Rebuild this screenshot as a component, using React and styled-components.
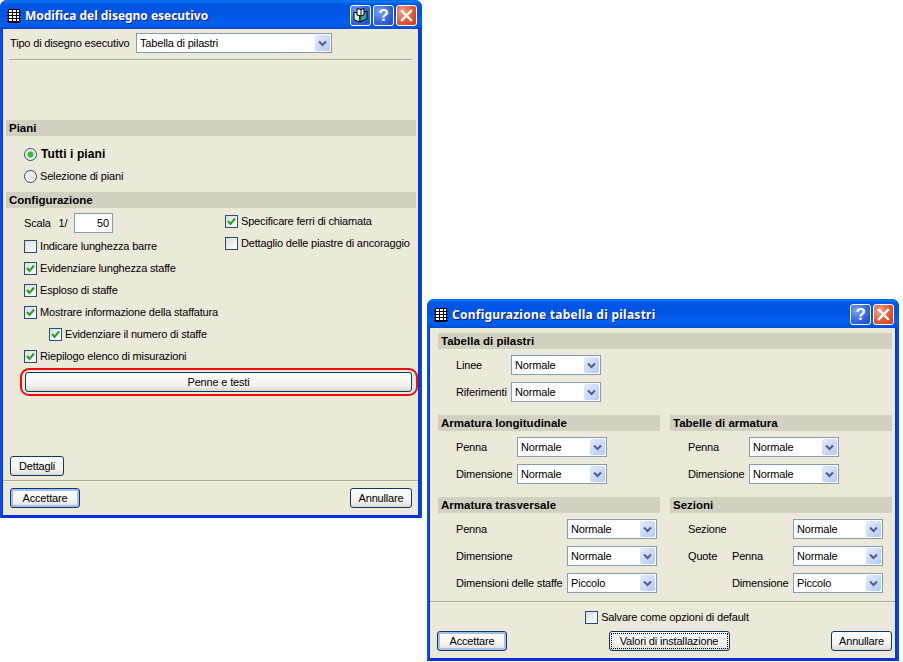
import React from 'react';
import styled, { createGlobalStyle } from 'styled-components';

const GlobalStyle = createGlobalStyle`
  html, body {
    margin: 0;
    padding: 0;
    background: #ffffff;
  }
  body {
    font-family: "Liberation Sans", Arial, sans-serif;
    font-size: 11px;
    letter-spacing: -0.17px;
    color: #000000;
  }
`;

const Desktop = styled.div`
  position: relative;
  width: 903px;
  height: 662px;
  overflow: hidden;
`;

const Win = styled.div`
  position: absolute;
  left: ${(p) => p.$left}px;
  top: ${(p) => p.$top}px;
  width: ${(p) => p.$width}px;
  height: ${(p) => p.$height}px;
  display: flex;
  flex-direction: column;
  box-sizing: border-box;
  padding: 0 4px 3px 3px;
  background: linear-gradient(to right, #0a5be8 0, #0831d9 3px, #0831d9 calc(100% - 4px), #0a4fd8 100%);
  border-radius: 7px 7px 0 0;
`;

const TitleBar = styled.div`
  height: 29px;
  box-sizing: border-box;
  margin: 0 -4px 0 -3px;
  padding: 2px 5px 0 7px;
  flex: none;
  display: flex;
  align-items: center;
  gap: 4px;
  border-radius: 7px 7px 0 0;
  background: linear-gradient(to bottom, #0a5ad8 0, #0a7bf2 1px, #0458e6 4px, #0054e3 9px, #0055e5 15px, #0360f0 22px, #0059e8 26px, #0048cf 29px);
`;

const Title = styled.span`
  flex: 1;
  font-family: "Noto Sans", sans-serif;
  font-weight: 700;
  font-size: 12px;
  letter-spacing: ${(p) => p.$spacing}px;
  color: #ffffff;
  text-shadow: 1px 1px 0 #0f1f8f;
  white-space: nowrap;
`;

const CaptionButton = styled.div`
  width: 21px;
  height: 21px;
  margin-left: -2px;
  box-sizing: border-box;
  flex: none;
  display: flex;
  align-items: center;
  justify-content: center;
  border: 1px solid #ffffff;
  border-radius: 3px;
  background: ${(p) =>
    p.$close
      ? 'radial-gradient(circle at 30% 30%, #f0a58c, #e0532f 60%, #c63a14)'
      : 'radial-gradient(circle at 30% 30%, #7da4f5, #2f62dc 60%, #1f48c4)'};
`;

const HelpMark = styled.span`
  font-family: "Liberation Sans", sans-serif;
  font-weight: 700;
  font-size: 17px;
  line-height: 19px;
  color: #ffffff;
`;

const Client = styled.div`
  flex: 1;
  background: #ece9d8;
  display: flex;
  flex-direction: column;
  min-height: 0;
`;

const Band = styled.div`
  height: 16px;
  line-height: 16px;
  padding-left: 3px;
  background: #d4d0c0;
  font-weight: 700;
  font-size: 11.5px;
  letter-spacing: 0;
  white-space: nowrap;
`;

const Line = styled.div`
  height: 2px;
  flex: none;
  background: #aca899;
  border-bottom: 1px solid #f4f2e8;
  box-sizing: border-box;
  margin: ${(p) => p.$margin};
`;

const TypeRow = styled.div`
  display: flex;
  align-items: center;
  height: 20px;
  margin: 4px 0 0 7px;
`;

const TypeLabel = styled.span`
  width: 126px;
  white-space: nowrap;
`;

const ComboBox = styled.div`
  width: ${(p) => p.$width || 90}px;
  height: 20px;
  box-sizing: border-box;
  flex: none;
  display: flex;
  align-items: center;
  border: 1px solid #7f9db9;
  background: #ffffff;
  padding: 1px;
`;

const ComboText = styled.span`
  flex: 1;
  padding-left: 2px;
  white-space: nowrap;
`;

const ComboArrow = styled.span`
  width: 15px;
  height: 16px;
  display: flex;
  align-items: center;
  justify-content: center;
  border-radius: 2px;
  background: linear-gradient(135deg, #e4ecfd, #b4caf6);
`;

const BandWrap = styled.div`
  margin: ${(p) => p.$margin};
`;

const RadioRow = styled.label`
  display: flex;
  align-items: center;
  gap: ${(p) => (p.$bold ? 4 : 3)}px;
  height: 22px;
  padding-left: 21px;
  font-weight: ${(p) => (p.$bold ? 700 : 400)};
  font-size: ${(p) => (p.$bold ? '12px' : '11px')};
  letter-spacing: ${(p) => (p.$bold ? '0.1px' : '-0.17px')};
  white-space: nowrap;
`;

const RadioDot = styled.span`
  width: 13px;
  height: 13px;
  box-sizing: border-box;
  flex: none;
  border-radius: 50%;
  border: 1px solid #1c5180;
  background: radial-gradient(circle, ${(p) => (p.$on ? '#2fbf3a 0, #2fbf3a 2.5px, #e6e4da 3.5px' : '#e6e4da 0')}, #ffffff 100%);
`;

const ConfigGrid = styled.div`
  display: grid;
  grid-template-columns: 201px 1fr;
  padding: 2px 0 0 18px;
`;

const Column = styled.div`
  padding-top: ${(p) => p.$top || 0}px;
`;

const CheckRow = styled.label`
  display: flex;
  align-items: center;
  gap: 3px;
  height: 22px;
  padding-left: ${(p) => p.$indent || 0}px;
  white-space: nowrap;
`;

const CheckBox = styled.span`
  width: 13px;
  height: 13px;
  box-sizing: border-box;
  flex: none;
  display: flex;
  align-items: center;
  justify-content: center;
  border: 1px solid #1c5180;
  background: linear-gradient(135deg, #dcdcd7, #ffffff);
`;

const ScaleRow = styled.div`
  display: flex;
  align-items: flex-start;
  height: 22px;
`;

const ScaleLabel = styled.span`
  width: 50px;
  line-height: 20px;
  word-spacing: 1px;
  white-space: nowrap;
`;

const ScaleInput = styled.div`
  width: 39px;
  height: 20px;
  box-sizing: border-box;
  border: 1px solid #7f9db9;
  background: #ffffff;
  text-align: right;
  padding-right: 3px;
  line-height: 18px;
`;

const RedRing = styled.div`
  margin: 1px -2px 0 14px;
  height: 28px;
  box-sizing: border-box;
  border: 2px solid #ee0c0c;
  border-radius: 9px;
  padding: 2px 4px 2px 3px;
`;

const Button = styled.div`
  width: ${(p) => (p.$width ? `${p.$width}px` : 'auto')};
  height: 20px;
  box-sizing: border-box;
  display: flex;
  align-items: center;
  justify-content: center;
  border: 1px solid #003c74;
  border-radius: 3px;
  background: linear-gradient(to bottom, #ffffff, #f3f2ec 70%, #dcd8cc);
  box-shadow: ${(p) => (p.$default ? 'inset 0 0 0 2px #a5bfe8' : 'none')};
  white-space: nowrap;
  position: relative;
`;

const FocusDots = styled.span`
  position: absolute;
  inset: 1px;
  border: 1px dotted #000000;
`;

const DetailWrap = styled.div`
  margin: 60px 0 0 7px;
`;

const Footer = styled.div`
  display: flex;
  justify-content: space-between;
  align-items: flex-start;
  padding: ${(p) => p.$padding};
`;

const BandGrid = styled.div`
  display: grid;
  grid-template-columns: ${(p) => p.$cols || '222px 222px'};
  column-gap: 10px;
  margin: ${(p) => p.$margin};
`;

const Fields = styled.div`
  display: flex;
  flex-direction: column;
  gap: 7px;
  margin-top: 6px;
  padding-left: 18px;
`;

const Field = styled.div`
  display: flex;
  align-items: center;
  height: 20px;
`;

const FieldLabel = styled.span`
  width: ${(p) => p.$width}px;
  flex: none;
  white-space: nowrap;
`;

const QuoteWord = styled.span`
  display: inline-block;
  width: ${(p) => p.$width}px;
`;

const SaveRow = styled.div`
  display: flex;
  justify-content: center;
  margin: 3px 0 0 9px;
`;

const TableIcon = () => (
  <svg width="14" height="14" viewBox="0 0 14 14">
    <rect x="1.5" y="0.5" width="11" height="13" fill="#ffffff" stroke="#000000" />
    <path d="M0 3.5h14M0 6.5h14M0 9.5h14M0 12.5h14M5.5 0v14M9.5 0v14" stroke="#000000" fill="none" />
  </svg>
);

const BookIcon = () => (
  <svg width="17" height="17" viewBox="0 0 17 17">
    <path d="M2 5 L8 7 L8 15 L2 13 Z" fill="#d8e8c8" stroke="#000000" />
    <path d="M8 7 L15 4 L15 12 L8 15 Z" fill="#2fa5a0" stroke="#000000" />
    <path d="M5 1.5 L9 2.5 L12 1.5 L12 8 L9 9 L5 8 Z" fill="#ffffff" stroke="#000000" />
    <path d="M9 2.5 L9 9" stroke="#000000" fill="none" />
  </svg>
);

const CloseIcon = () => (
  <svg width="13" height="13" viewBox="0 0 13 13">
    <path d="M2 2 L11 11 M11 2 L2 11" stroke="#ffffff" strokeWidth="2.4" strokeLinecap="square" fill="none" />
  </svg>
);

const Chevron = () => (
  <svg width="9" height="7" viewBox="0 0 9 7">
    <path d="M1 1.5 L4.5 5 L8 1.5" stroke="#4d6185" strokeWidth="2" fill="none" />
  </svg>
);

const Tick = () => (
  <svg width="9" height="9" viewBox="0 0 9 9">
    <path d="M1 4 L3.5 7 L8 1.5" stroke="#21a121" strokeWidth="2" fill="none" />
  </svg>
);

const Combo = ({ value, width }) => (
  <ComboBox $width={width}>
    <ComboText>{value}</ComboText>
    <ComboArrow><Chevron /></ComboArrow>
  </ComboBox>
);

const Check = ({ on, indent, children }) => (
  <CheckRow $indent={indent}>
    <CheckBox>{on && <Tick />}</CheckBox>
    {children}
  </CheckRow>
);

const Titled = ({ title, book, spacing }) => (
  <TitleBar>
    <TableIcon />
    <Title $spacing={spacing}>{title}</Title>
    {book && <CaptionButton><BookIcon /></CaptionButton>}
    <CaptionButton><HelpMark>?</HelpMark></CaptionButton>
    <CaptionButton $close><CloseIcon /></CaptionButton>
  </TitleBar>
);

const FieldGroup = ({ title, labelWidth, rows }) => (
  <div>
    <Band>{title}</Band>
    <Fields>
      {rows.map((r, i) => (
        <Field key={i}>
          <FieldLabel $width={labelWidth}>
            {r.quote !== undefined && <QuoteWord $width={44}>{r.quote}</QuoteWord>}
            {r.label}
          </FieldLabel>
          <Combo value={r.value} />
        </Field>
      ))}
    </Fields>
  </div>
);

const App = () => (
  <Desktop>
    <GlobalStyle />

    <Win $left={0} $top={0} $width={422} $height={518}>
      <Titled title="Modifica del disegno esecutivo" book spacing={-0.03} />
      <Client>
        <TypeRow>
          <TypeLabel>Tipo di disegno esecutivo</TypeLabel>
          <Combo value="Tabella di pilastri" width={196} />
        </TypeRow>
        <Line $margin="6px 6px 0 6px" />

        <BandWrap $margin="59px 2px 0 3px">
          <Band>Piani</Band>
        </BandWrap>
        <BandWrap $margin="7px 0 0 0">
          <RadioRow $bold>
            <RadioDot $on />
            Tutti i piani
          </RadioRow>
          <RadioRow>
            <RadioDot />
            Selezione di piani
          </RadioRow>
        </BandWrap>

        <BandWrap $margin="5px 2px 0 3px">
          <Band>Configurazione</Band>
          <ConfigGrid>
            <Column $top={3}>
              <ScaleRow>
                <ScaleLabel>Scala&nbsp; 1/</ScaleLabel>
                <ScaleInput>50</ScaleInput>
              </ScaleRow>
              <Check>Indicare lunghezza barre</Check>
              <Check on>Evidenziare lunghezza staffe</Check>
              <Check on>Esploso di staffe</Check>
              <Check on>Mostrare informazione della staffatura</Check>
              <Check on indent={25}>Evidenziare il numero di staffe</Check>
              <Check on>Riepilogo elenco di misurazioni</Check>
            </Column>
            <Column>
              <Check on>Specificare ferri di chiamata</Check>
              <Check>Dettaglio delle piastre di ancoraggio</Check>
            </Column>
          </ConfigGrid>
          <RedRing>
            <Button>Penne e testi</Button>
          </RedRing>
        </BandWrap>

        <DetailWrap>
          <Button $width={54}>Dettagli</Button>
        </DetailWrap>
        <Line $margin="4px 0 0 0" />
        <Footer $padding="6px 6px 0 7px">
          <Button $width={70} $default>Accettare</Button>
          <Button $width={62}>Annullare</Button>
        </Footer>
      </Client>
    </Win>

    <Win $left={427} $top={299} $width={472} $height={362}>
      <Titled title="Configurazione tabella di pilastri" spacing={0.25} />
      <Client>
        <BandGrid $margin="5px 0 0 8px" $cols="454px">
          <FieldGroup
            title="Tabella di pilastri"
            labelWidth={55}
            rows={[
              { label: 'Linee', value: 'Normale' },
              { label: 'Riferimenti', value: 'Normale' },
            ]}
          />
        </BandGrid>
        <BandGrid $margin="13px 0 0 8px">
          <FieldGroup
            title="Armatura longitudinale"
            labelWidth={61}
            rows={[
              { label: 'Penna', value: 'Normale' },
              { label: 'Dimensione', value: 'Normale' },
            ]}
          />
          <FieldGroup
            title="Tabelle di armatura"
            labelWidth={61}
            rows={[
              { label: 'Penna', value: 'Normale' },
              { label: 'Dimensione', value: 'Normale' },
            ]}
          />
        </BandGrid>
        <BandGrid $margin="13px 0 0 8px">
          <FieldGroup
            title="Armatura trasversale"
            labelWidth={111}
            rows={[
              { label: 'Penna', value: 'Normale' },
              { label: 'Dimensione', value: 'Normale' },
              { label: 'Dimensioni delle staffe', value: 'Piccolo' },
            ]}
          />
          <FieldGroup
            title="Sezioni"
            labelWidth={105}
            rows={[
              { label: 'Sezione', value: 'Normale' },
              { quote: 'Quote', label: 'Penna', value: 'Normale' },
              { quote: '', label: 'Dimensione', value: 'Piccolo' },
            ]}
          />
        </BandGrid>
        <Line $margin="8px 0 0 0" />
        <SaveRow>
          <Check>Salvare come opzioni di default</Check>
        </SaveRow>
        <Footer $padding="3px 3px 0 7px">
          <Button $width={70} $default>Accettare</Button>
          <Button $width={121}>
            <FocusDots />
            Valori di installazione
          </Button>
          <Button $width={61}>Annullare</Button>
        </Footer>
      </Client>
    </Win>
  </Desktop>
);

export default App;
